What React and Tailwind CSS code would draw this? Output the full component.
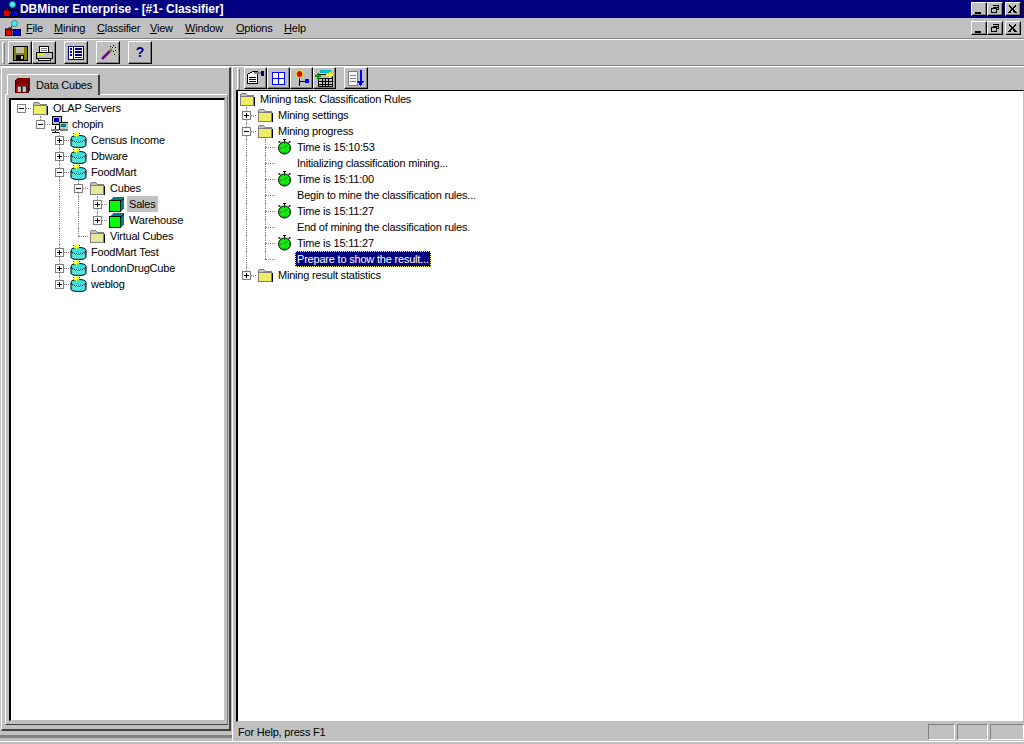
import React from "react";

const font = { fontFamily: '"Liberation Sans", Arial, sans-serif' };

// bouton en relief style Windows 95
const raised = "border border-t-white border-l-white border-r-black border-b-black shadow-[inset_-1px_-1px_0_#808080]";

// damier 1px pour le remplissage tramé des icônes
function checker(x0, y0, w, h) {
  let d = "";
  for (let y = y0; y < y0 + h; y++) {
    for (let x = x0; x < x0 + w; x++) {
      if ((x + y) % 2 === 0) d += `M${x} ${y}h1v1h-1z`;
    }
  }
  return d;
}

const folderDots = checker(2, 5, 12, 8);
const cylinderDots = checker(3, 9, 11, 5);

function Folder() {
  return (
    <svg width="16" height="14" viewBox="0 0 16 14" shapeRendering="crispEdges">
      <path d="M1.500 4.500V2.500l1-1h4l2 2h5.500v1z" fill="#c0c0c0" stroke="#808080" />
      <rect x="1.500" y="4.500" width="12.500" height="9" fill="#f2f266" stroke="#808080" />
      <path d={folderDots} fill="#e4e49c" />
      <path d="M15 4.500v9.500H3" fill="none" stroke="#000" />
    </svg>
  );
}

function Cylinder() {
  return (
    <svg width="17" height="16" viewBox="0 0 17 16" className="shrink-0">
      <path d="M1 6.500Q1 3.500 8.500 3.500Q16 3.500 16 6.500V13Q16 15.500 8.500 15.500Q1 15.500 1 13Z" fill="#30e4e4" stroke="#000" />
      <path d="M1 7Q2 10 8.500 10Q15 10 16 7" fill="none" stroke="#000" />
      <path d={cylinderDots} fill="#70e8e8" shapeRendering="crispEdges" />
      <path d="M6 0h1v2h2v1.500H7V6H6V3.500H4V2h2z" fill="#ffff00" shapeRendering="crispEdges" />
      <path d="M3 1h1v1H3zM9 1h1v1H9zM3 4h1v1H3z" fill="#404040" shapeRendering="crispEdges" />
    </svg>
  );
}

function Cube() {
  return (
    <svg width="15" height="15" viewBox="0 0 15 15" shapeRendering="crispEdges" className="shrink-0">
      <path d="M4 0h11v11l-3 4H0V4z" fill="#008080" />
      <rect x="0" y="3" width="12" height="12" fill="#000" />
      <rect x="1" y="4" width="10" height="10" fill="#00ff00" />
      <path d="M12 3l3-3v1l-3 3z" fill="#000" />
    </svg>
  );
}

function Watch() {
  return (
    <svg width="15" height="16" viewBox="0 0 15 16" className="shrink-0">
      <path d="M6 0h3v1H6zM7 1h1v2H7zM2 2l2 1-1 1-2-1zM13 2l-2 1 1 1 2-1z" fill="#000" />
      <circle cx="7.500" cy="9" r="6" fill="#10e810" stroke="#000" />
      <path d="M7 4h1v1H7zM7 13h1v1H7zM3 9h1v1H3zM12 9h1v1h-1zM7 8h1v1H7zM8 7h1v1H8zM9 6h1v1H9z" fill="#006000" />
    </svg>
  );
}

function Computer() {
  return (
    <svg width="17" height="17" viewBox="0 0 17 17" shapeRendering="crispEdges" className="shrink-0">
      <rect x="1" y="0" width="9" height="8" fill="#c0c0c0" stroke="#000" />
      <rect x="3" y="2" width="5" height="4" fill="#0000c0" />
      <rect x="8" y="6" width="9" height="7" fill="#c0c0c0" stroke="#000" />
      <rect x="10" y="8" width="5" height="3" fill="#008080" />
      <rect x="0" y="13" width="8" height="2" fill="#808080" />
      <rect x="9" y="13" width="8" height="2" fill="#808080" />
      <path d="M4 10v3M1 16h7M4 15v2" stroke="#000" />
      <rect x="2" y="9" width="4" height="1" fill="#ffff00" />
    </svg>
  );
}

function Logo({ size = 16 }) {
  return (
    <svg width={size} height={size} viewBox="0 0 16 16" className="shrink-0">
      <path d="M4 7l6 6H4z" fill="#ffff00" stroke="#000" strokeWidth=".6" />
      <path d="M7 6L5 9" stroke="#000" />
      <circle cx="9.500" cy="3.500" r="3" fill="#40f0f0" stroke="#408080" />
      <rect x="0.500" y="9" width="6.500" height="6.500" fill="#e00000" stroke="#000" />
      <rect x="8.500" y="9.500" width="7" height="6" fill="#0000e0" stroke="#000" />
    </svg>
  );
}

function CubesTab() {
  return (
    <svg width="15" height="15" viewBox="0 0 15 15" shapeRendering="crispEdges" className="shrink-0">
      <path d="M2 0h13v12l-2 3H0V3z" fill="#800000" />
      <rect x="0" y="3" width="13" height="12" fill="#a00000" stroke="#400000" strokeWidth="1" />
      <rect x="2" y="8" width="4" height="6" fill="#c0c0c0" stroke="#000" strokeWidth=".5" />
      <rect x="7" y="8" width="4" height="6" fill="#c0c0c0" stroke="#000" strokeWidth=".5" />
      <path d="M1 5h11" stroke="#000" />
    </svg>
  );
}

const toolIcons = {
  save: (
    <svg width="16" height="16" viewBox="0 0 16 16" shapeRendering="crispEdges">
      <rect x="1" y="1" width="14" height="14" fill="#808000" stroke="#000" />
      <rect x="4" y="2" width="8" height="6" fill="#c0c0a0" />
      <rect x="4" y="10" width="8" height="5" fill="#000" />
      <rect x="9" y="11" width="2" height="3" fill="#c0c0c0" />
    </svg>
  ),
  print: (
    <svg width="18" height="16" viewBox="0 0 18 16" shapeRendering="crispEdges">
      <path d="M5 1h8l1 6H4z" fill="#fff" stroke="#000" />
      <path d="M1 7h16v6H1z" fill="#c0c0c0" stroke="#000" />
      <path d="M3 13h12v2H3z" fill="#fff" stroke="#000" />
      <path d="M3 9h6" stroke="#ffff00" />
      <path d="M6 3h6M6 5h6" stroke="#808080" />
    </svg>
  ),
  list: (
    <svg width="16" height="14" viewBox="0 0 16 14" shapeRendering="crispEdges">
      <rect x="0.500" y="0.500" width="15" height="13" fill="#fff" stroke="#000080" strokeWidth="1" />
      <path d="M5.500 0v14" stroke="#000080" />
      <path d="M2 3h2M2 6h2M2 9h2M7 3h7M7 6h7M7 9h7M7 11.500h7" stroke="#000080" strokeWidth="1.500" />
    </svg>
  ),
  wand: (
    <svg width="17" height="17" viewBox="0 0 17 17">
      <path d="M2 15L10 7" stroke="#800080" strokeWidth="2.500" />
      <path d="M10 7l2-2" stroke="#808000" strokeWidth="2.500" />
      <path d="M13 1h1v1h-1zM15 3h1v1h-1zM13 7h1v1h-1zM15 6h1v1h-1zM10 2h1v1h-1zM14 10h1v1h-1zM12 3h1v1h-1z" fill="#000" shapeRendering="crispEdges" />
    </svg>
  ),
  form: (
    <svg width="19" height="17" viewBox="0 0 19 17" shapeRendering="crispEdges">
      <path d="M1.500 4.500l5-3h5v12h-10z" fill="#fff" stroke="#000" />
      <path d="M3 7h7M3 9h7M3 11h7" stroke="#000" />
      <path d="M8 3h7" stroke="#808080" strokeWidth="2" />
      <rect x="15" y="1" width="3" height="5" fill="#000080" />
    </svg>
  ),
  grid: (
    <svg width="13" height="13" viewBox="0 0 13 13" shapeRendering="crispEdges">
      <rect x="0.500" y="0.500" width="12" height="12" fill="#fff" stroke="#0000ff" />
      <path d="M6.500 0v13M0 6.500h13" stroke="#0000ff" />
    </svg>
  ),
  tree: (
    <svg width="15" height="17" viewBox="0 0 15 17">
      <path d="M5.500 7v9M5 11.500h6" stroke="#000" />
      <circle cx="5.500" cy="4" r="3.500" fill="#e00000" stroke="#ffff00" />
      <rect x="11" y="9" width="4" height="4" fill="#0000ff" />
    </svg>
  ),
  table: (
    <svg width="19" height="17" viewBox="0 0 19 17" shapeRendering="crispEdges">
      <rect x="3.500" y="4.500" width="14" height="12" fill="#c0c0c0" stroke="#000" />
      <path d="M3 8.500h15M3 11.500h15M3 14.500h15M7.500 8v9M10.500 8v9M13.500 8v9" stroke="#000" />
      <rect x="5" y="0" width="11" height="3" fill="#00c0c0" />
      <path d="M0 6h6M3 3v6" stroke="#00a000" strokeWidth="2" />
      <path d="M11 5h7M14.500 2v6" stroke="#ffff00" strokeWidth="2" />
    </svg>
  ),
  sort: (
    <svg width="16" height="17" viewBox="0 0 16 17" shapeRendering="crispEdges">
      <rect x="0.500" y="1.500" width="9" height="14" fill="#fff" stroke="#808080" />
      <path d="M2 5h6M2 8h6M2 11h6" stroke="#808080" />
      <path d="M12.500 0v13" stroke="#0000ff" strokeWidth="2" />
      <path d="M9 11h7l-3.500 5z" fill="#0000ff" />
    </svg>
  ),
};

function ToolButton({ children, className = "" }) {
  return (
    <div className={`flex items-center justify-center bg-[#c0c0c0] ${raised} ${className}`}>{children}</div>
  );
}

function WinButton({ type }) {
  return (
    <div className={`w-[16px] h-[14px] bg-[#c0c0c0] flex items-center justify-center ${raised}`}>
      <svg width="10" height="9" viewBox="0 0 10 9" shapeRendering="crispEdges">
        {type === "min" && <rect x="1" y="7" width="6" height="2" fill="#000" />}
        {type === "max" && (
          <path d="M3 0h6v5H7v3H1V3h2zM3 1v1h5v-1zM2 4v3h4V4zM7 3v1h1V3z" fill="#000" fillRule="evenodd" />
        )}
        {type === "close" && <path d="M1 0.500l7 7.500M8 0.500l-7 7.500" stroke="#000" strokeWidth="1.600" fill="none" />}
      </svg>
    </div>
  );
}

function WinButtons() {
  return (
    <div className="flex items-center">
      <WinButton type="min" />
      <WinButton type="max" />
      <div className="w-[2px]" />
      <WinButton type="close" />
    </div>
  );
}

function Connector({ up, down, box }) {
  return (
    <div className="relative w-[19px] h-[16px] shrink-0">
      {up && <div className="absolute left-[9px] top-0 h-[8px] border-l border-dotted border-[#808080]" />}
      {down && <div className="absolute left-[9px] top-[8px] h-[8px] border-l border-dotted border-[#808080]" />}
      <div className="absolute left-[9px] top-[8px] w-[10px] border-t border-dotted border-[#808080]" />
      {box && (
        <div className="absolute left-[5px] top-[4px] w-[9px] h-[9px] bg-white border border-[#808080]">
          <div className="absolute left-[1px] top-[3px] w-[5px] h-[1px] bg-black" />
          {box === "+" && <div className="absolute left-[3px] top-[1px] w-[1px] h-[5px] bg-black" />}
        </div>
      )}
    </div>
  );
}

function TreeRow({ d = 0, guides = [], up, down, box, icon, selected, focused, children }) {
  const cells = [];
  for (let i = 0; i < d; i++) {
    cells.push(
      <div key={i} className="relative w-[19px] h-[16px] shrink-0">
        {guides.includes(i) && <div className="absolute left-[9px] top-0 h-[16px] border-l border-dotted border-[#808080]" />}
      </div>
    );
  }
  return (
    <div className="flex items-center h-[16px] whitespace-nowrap">
      {cells}
      {d >= 0 && <Connector up={up} down={down} box={box} />}
      <div className="w-[16px] h-[16px] ml-[1px] shrink-0 flex items-center justify-center">{icon}</div>
      {selected && <div className="ml-[3px] px-[2px] h-[16px] leading-[16px] bg-[#c0c0c0]">{children}</div>}
      {focused && (
        <div className="ml-[3px] px-[1px] h-[16px] leading-[14px] bg-[#000080] text-white border border-dotted border-[#ffff80]">{children}</div>
      )}
      {!selected && !focused && <div className="ml-[5px] leading-[16px]">{children}</div>}
    </div>
  );
}

function LeftTree() {
  const db = <Cylinder />;
  return (
    <div className="text-black pl-[1px]">
      <TreeRow box="-" icon={<Folder />}>OLAP Servers</TreeRow>
      <TreeRow d={1} up box="-" icon={<Computer />}>chopin</TreeRow>
      <TreeRow d={2} up down box="+" icon={db}>Census Income</TreeRow>
      <TreeRow d={2} up down box="+" icon={db}>Dbware</TreeRow>
      <TreeRow d={2} up down box="-" icon={db}>FoodMart</TreeRow>
      <TreeRow d={3} guides={[2]} up down box="-" icon={<Folder />}>Cubes</TreeRow>
      <TreeRow d={4} guides={[2, 3]} up down box="+" icon={<Cube />} selected>Sales</TreeRow>
      <TreeRow d={4} guides={[2, 3]} up box="+" icon={<Cube />}>Warehouse</TreeRow>
      <TreeRow d={3} guides={[2]} up icon={<Folder />}>Virtual Cubes</TreeRow>
      <TreeRow d={2} up down box="+" icon={db}>FoodMart Test</TreeRow>
      <TreeRow d={2} up down box="+" icon={db}>LondonDrugCube</TreeRow>
      <TreeRow d={2} up box="+" icon={db}>weblog</TreeRow>
    </div>
  );
}

function RightTree() {
  const log = [
    ["Time is 15:10:53", true],
    ["Initializing classification mining...", false],
    ["Time is 15:11:00", true],
    ["Begin to mine the classification rules...", false],
    ["Time is 15:11:27", true],
    ["End of mining the classification rules.", false],
    ["Time is 15:11:27", true],
  ];
  return (
    <div className="text-black -ml-[1px]">
      <div className="ml-[1px]">
        <TreeRow d={-1} icon={<Folder />}>Mining task: Classification Rules</TreeRow>
      </div>
      <TreeRow up down box="+" icon={<Folder />}>Mining settings</TreeRow>
      <TreeRow up down box="-" icon={<Folder />}>Mining progress</TreeRow>
      {log.map(([text, watch], i) => (
        <TreeRow key={i} d={1} guides={[0]} up down icon={watch ? <Watch /> : null}>{text}</TreeRow>
      ))}
      <TreeRow d={1} guides={[0]} up icon={null} focused>Prepare to show the result...</TreeRow>
      <TreeRow up box="+" icon={<Folder />}>Mining result statistics</TreeRow>
    </div>
  );
}

const menus = [
  ["F", "ile", "w-[28px]"],
  ["M", "ining", "w-[43px]"],
  ["C", "lassifier", "w-[53px]"],
  ["V", "iew", "w-[35px]"],
  ["W", "indow", "w-[51px]"],
  ["O", "ptions", "w-[48px]"],
  ["H", "elp", "w-[30px]"],
];

export default function App() {
  return (
    <div style={font} className="w-[1024px] h-[744px] bg-[#c0c0c0] flex flex-col overflow-hidden text-[11px] tracking-[-0.2px] text-black">
      {/* barre de titre */}
      <div className="h-[18px] bg-[#000080] flex items-center pl-[3px] pr-[3px] shrink-0">
        <Logo />
        <span className="ml-[1px] text-white font-bold text-[12px] tracking-[-0.05px] flex-1">DBMiner Enterprise - [#1- Classifier]</span>
        <WinButtons />
      </div>

      {/* menu */}
      <div className="h-[20px] flex items-center pl-[5px] pr-[3px] shrink-0">
        <Logo />
        <div className="flex ml-[5px] flex-1">
          {menus.map(([k, rest, w]) => (
            <span key={k} className={w}>
              <span className="underline">{k}</span>{rest}
            </span>
          ))}
        </div>
        <WinButtons />
      </div>
      <div className="h-[1px] bg-[#808080] shrink-0" />
      <div className="h-[1px] bg-white shrink-0" />

      {/* barre d'outils */}
      <div className="h-[25px] flex items-center pl-[2px] shrink-0">
        <div className="w-[3px] h-[22px] border border-t-white border-l-white border-r-[#808080] border-b-[#808080]" />
        <div className="flex h-[23px] ml-[3px]">
          <ToolButton className="w-[24px]">{toolIcons.save}</ToolButton>
          <ToolButton className="w-[24px]">{toolIcons.print}</ToolButton>
          <ToolButton className="w-[24px] ml-[8px]">{toolIcons.list}</ToolButton>
          <ToolButton className="w-[24px] ml-[8px]">{toolIcons.wand}</ToolButton>
          <ToolButton className="w-[24px] ml-[8px] text-[#000080] font-bold text-[14px]">?</ToolButton>
        </div>
      </div>
      <div className="h-[1px] bg-[#808080] shrink-0" />
      <div className="h-[1px] bg-white shrink-0" />

      {/* zone principale */}
      <div className="flex flex-1 min-h-0">
        {/* panneau gauche */}
        <div className="w-[232px] shrink-0 flex flex-col">
          <div className="flex-1 min-h-0 flex flex-col ml-[1px] mr-[1px] border-l border-t border-l-white border-t-white border-r-2 border-b-2 border-r-[#404040] border-b-[#404040]">
            <div className="h-[26px] pl-[5px] flex items-end shrink-0">
              <div className="relative z-10 -mb-[1px] w-[93px] h-[21px] bg-[#c0c0c0] border-t border-l border-white border-r-2 border-r-[#404040] rounded-t-[2px] flex items-center pl-[7px] gap-[6px] whitespace-nowrap">
                <CubesTab />
                <span>Data Cubes</span>
              </div>
            </div>
            <div className="flex-1 min-h-0 ml-[3px] mr-[1px] mb-[4px] border-t border-l border-white border-r border-b border-r-[#808080] border-b-[#404040] pl-[3px] pr-[2px] pt-[3px] pb-[3px] flex">
              <div className="flex-1 bg-white border-t-2 border-l-2 border-t-black border-l-black border-r border-b border-r-[#c0c0c0] border-b-[#c0c0c0] overflow-hidden">
                <LeftTree />
              </div>
            </div>
          </div>
          <div className="h-[4px] shrink-0" />
          <div className="h-[3px] bg-[#808080] shrink-0" />
          <div className="h-[3px] shrink-0" />
        </div>

        {/* séparateur */}
        <div className="w-[4px] shrink-0 flex">
          <div className="w-[1px] bg-white" />
        </div>

        {/* panneau droit */}
        <div className="flex-1 min-w-0 flex flex-col">
          <div className="h-[23px] flex items-center shrink-0 pl-[1px]">
            <div className="w-[3px] h-[22px] border border-t-white border-l-white border-r-[#808080] border-b-[#808080]" />
            <div className="flex h-[22px] ml-[4px] self-start">
              <ToolButton className="w-[23px]">{toolIcons.form}</ToolButton>
              <ToolButton className="w-[23px]">{toolIcons.grid}</ToolButton>
              <ToolButton className="w-[23px]">{toolIcons.tree}</ToolButton>
              <ToolButton className="w-[23px]">{toolIcons.table}</ToolButton>
              <ToolButton className="w-[24px] ml-[8px]">{toolIcons.sort}</ToolButton>
            </div>
          </div>
          <div className="flex-1 min-h-0 bg-white border-t border-l-2 border-t-black border-l-black border-r border-b border-r-[#c0c0c0] border-b-[#c0c0c0] overflow-hidden">
            <RightTree />
          </div>

          {/* barre d'état */}
          <div className="h-[19px] shrink-0 flex items-center pt-[1px]">
            <span className="ml-[2px] flex-1">For Help, press F1</span>
            <div className="w-[27px] h-[16px] border border-t-[#808080] border-l-[#808080] border-r-white border-b-white" />
            <div className="w-[31px] h-[16px] ml-[2px] border border-t-[#808080] border-l-[#808080] border-r-white border-b-white" />
            <div className="w-[34px] h-[16px] ml-[2px] border border-t-[#808080] border-l-[#808080] border-r-white border-b-white" />
          </div>
        </div>
      </div>

      <div className="h-[1px] bg-white shrink-0" />
      <div className="h-[2px] shrink-0" />
    </div>
  );
}
